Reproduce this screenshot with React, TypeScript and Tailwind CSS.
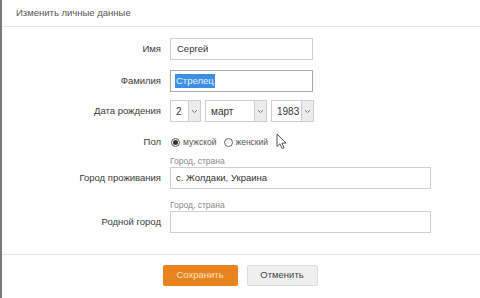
import React from "react";

function Chevron() {
  return (
    <svg width="7" height="5" viewBox="0 0 7 5" fill="none">
      <path d="M1 1.2 L3.5 3.6 L6 1.2" stroke="#777" strokeWidth="1" />
    </svg>
  );
}

function Select({ value, w }: { value: string; w: string }) {
  return (
    <div className={`flex h-[22px] ${w} border border-[#cfcfcf] bg-white`}>
      <div className="flex-1 pl-[5px] flex items-center text-[10px] text-[#333]">{value}</div>
      <div className="w-[12px] border-l border-[#cfcfcf] bg-[#ececec] flex items-center justify-center">
        <Chevron />
      </div>
    </div>
  );
}

function Label({ children }: { children: React.ReactNode }) {
  return (
    <div className="w-[168px] shrink-0 pr-[9px] text-right text-[9.5px] text-[#3a3a3a] h-[22px] flex items-center justify-end">
      {children}
    </div>
  );
}

export default function App() {
  return (
    <div
      className="relative w-[480px] h-[298px] bg-white border-l-2 border-[#7a7a7a] overflow-hidden flex flex-col"
      style={{ fontFamily: '"Liberation Sans", Arial, sans-serif' }}
    >
      <div className="h-[27px] shrink-0 border-b border-[#e6e6e6] pl-[14px] flex items-center text-[9.5px] text-[#555]">
        Изменить личные данные
      </div>

      <div className="flex flex-col pt-[11px]">
        <div className="flex items-center">
          <Label>Имя</Label>
          <div className="w-[143px] h-[22px] border border-[#cfcfcf] pl-[6px] flex items-center text-[9.5px] text-[#333]">
            Сергей
          </div>
        </div>

        <div className="flex items-center mt-[10px]">
          <Label>Фамилия</Label>
          <div className="w-[143px] h-[22px] border border-[#a9a9a9] pl-[4px] flex items-center text-[9.5px]">
            <span className="bg-[#3d8fe3] text-[#eaf2fb] px-[1px] leading-[14px]">Стрелец</span>
          </div>
        </div>

        <div className="flex items-center mt-[8px]">
          <Label>Дата рождения</Label>
          <div className="flex gap-[4px]">
            <Select value="2" w="w-[31px]" />
            <Select value="март" w="w-[62px]" />
            <Select value="1983" w="w-[43px]" />
          </div>
        </div>

        <div className="flex items-center mt-[10px] h-[20px]">
          <Label>Пол</Label>
          <div className="flex items-center text-[8.5px] text-[#555]">
            <span className="w-[9px] h-[9px] rounded-full border border-[#555] flex items-center justify-center mr-[3px] ml-[1px]">
              <span className="w-[5px] h-[5px] rounded-full bg-[#333]" />
            </span>
            <span>мужской</span>
            <span className="w-[9px] h-[9px] rounded-full border border-[#666] ml-[7px] mr-[3px]" />
            <span>женский</span>
          </div>
        </div>

        <div className="flex items-end mt-[4px]">
          <Label>Город проживания</Label>
          <div className="flex flex-col">
            <div className="text-[8.5px] leading-[11px] text-[#8a8a8a]">Город, страна</div>
            <div className="w-[261px] h-[22px] border border-[#cfcfcf] pl-[5px] flex items-center text-[9.5px] text-[#333]">
              с. Жолдаки, Украина
            </div>
          </div>
        </div>

        <div className="flex items-end mt-[11px]">
          <Label>Родной город</Label>
          <div className="flex flex-col">
            <div className="text-[8.5px] leading-[11px] text-[#8a8a8a]">Город, страна</div>
            <div className="w-[261px] h-[22px] border border-[#cfcfcf]" />
          </div>
        </div>
      </div>

      <div className="mt-[21px] border-t border-[#e4e4e4] flex justify-center gap-[9px] pt-[10px] pr-[2px]">
        <button className="w-[75px] h-[21px] bg-[#e8841f] rounded-[2px] text-[9.5px] text-[#fbe3c6]">
          Сохранить
        </button>
        <button className="w-[71px] h-[21px] bg-[#efefef] border border-[#dcdcdc] rounded-[2px] text-[9.5px] text-[#444]">
          Отменить
        </button>
      </div>

      <svg
        className="absolute left-[274px] top-[133px]"
        width="12"
        height="17"
        viewBox="0 0 12 17"
      >
        <path
          d="M1 1 L1 13.5 L4 10.8 L6.2 15.6 L8.1 14.8 L5.9 10.1 L10 10.1 Z"
          fill="#fff"
          stroke="#555"
          strokeWidth="1"
          strokeLinejoin="round"
        />
      </svg>
    </div>
  );
}
